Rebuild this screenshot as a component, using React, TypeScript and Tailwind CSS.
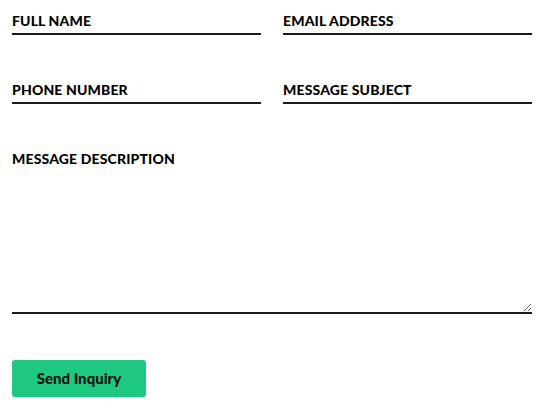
import React from 'react';

const labelCls = 'block text-[14px] leading-5 font-black uppercase text-black tracking-[0.01em]';
const lineCls = 'block w-full h-[4px] bg-transparent border-0 border-b-2 border-[#1a1a1a] outline-none p-0';

function Field({ label, type = 'text' }: { label: string; type?: string }) {
    return (
        <div className="flex-1">
            <label className={labelCls}>{label}</label>
            <input type={type} className={lineCls} />
        </div>
    );
}

export default function App() {
    return (
        <div className="min-h-[414px] w-[545px] bg-white" style={{ fontFamily: 'Lato, "Open Sans", sans-serif' }}>
            <form className="flex flex-col gap-[45px] pt-[11px] pl-3 pr-[13px]" onSubmit={(e) => e.preventDefault()}>
                <div className="flex gap-[22px]">
                    <Field label="Full Name" />
                    <Field label="Email Address" type="email" />
                </div>
                <div className="flex gap-[22px]">
                    <Field label="Phone Number" type="tel" />
                    <Field label="Message Subject" />
                </div>
                <div>
                    <label className={labelCls}>Message Description</label>
                    <textarea className="block w-full h-[145px] bg-transparent border-0 border-b-2 border-[#1a1a1a] outline-none p-0" />
                </div>
                <div className="pt-[1px]">
                    <button
                        type="submit"
                        className="w-[134px] h-[37px] rounded-[3px] bg-[#1fc880] text-[15px] font-black text-[#111]"
                    >
                        Send Inquiry
                    </button>
                </div>
            </form>
        </div>
    );
}
